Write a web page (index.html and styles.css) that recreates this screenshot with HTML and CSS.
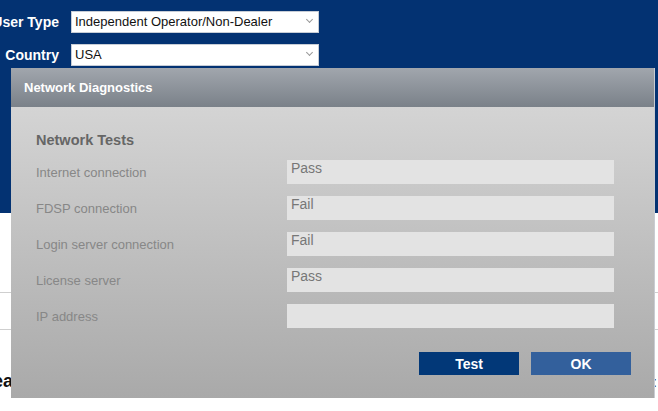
FILE: index.html
```html
<!DOCTYPE html>
<html lang="en">
<head>
  <meta charset="UTF-8">
  <title>Network Diagnostics</title>
  <link rel="stylesheet" href="styles.css">
</head>
<body>
  <div class="page">
    <div class="banner">
      <div class="form-row">
        <label class="form-label">User Type</label>
        <div class="select">Independent Operator/Non-Dealer<span class="chev"></span></div>
      </div>
      <div class="form-row">
        <label class="form-label">Country</label>
        <div class="select">USA<span class="chev"></span></div>
      </div>
    </div>
    <div class="content">
      <div class="rule"></div>
      <div class="rule second"></div>
      <div class="footer-row">
        <h2 class="section-head">Area</h2>
        <span class="colon">:</span>
      </div>
    </div>
  </div>

  <div class="dialog">
    <div class="dialog-head">Network Diagnostics</div>
    <div class="dialog-body">
      <h3 class="tests-title">Network Tests</h3>
      <div class="test-row">
        <span class="test-label">Internet connection</span>
        <div class="test-value">Pass</div>
      </div>
      <div class="test-row">
        <span class="test-label">FDSP connection</span>
        <div class="test-value">Fail</div>
      </div>
      <div class="test-row">
        <span class="test-label">Login server connection</span>
        <div class="test-value">Fail</div>
      </div>
      <div class="test-row">
        <span class="test-label">License server</span>
        <div class="test-value">Pass</div>
      </div>
      <div class="test-row">
        <span class="test-label">IP address</span>
        <div class="test-value"></div>
      </div>
      <div class="actions">
        <button class="btn btn-test">Test</button>
        <button class="btn btn-ok">OK</button>
      </div>
    </div>
  </div>
</body>
</html>
```

FILE: styles.css
```css
body {
  margin: 0;
  font-family: "Liberation Sans", Arial, sans-serif;
  background: #fff;
  width: 658px;
  height: 411px;
  overflow: hidden;
  position: relative;
}
.banner {
  background: #033272;
  height: 213px;
  padding-top: 11px;
  box-sizing: border-box;
}
.form-row {
  display: flex;
  align-items: center;
  gap: 12px;
  margin-bottom: 11px;
}
.form-label {
  width: 59px;
  text-align: right;
  color: #fff;
  font-weight: bold;
  font-size: 14px;
  white-space: nowrap;
  direction: rtl;
}
.select {
  width: 248px;
  height: 22px;
  box-sizing: border-box;
  background: #fff;
  border: 1px solid #c7cdd6;
  font-size: 13px;
  color: #111;
  padding-left: 3px;
  line-height: 20px;
  position: relative;
}
.chev {
  position: absolute;
  right: 6px;
  top: 5px;
  width: 4px;
  height: 4px;
  border-right: 1px solid #999;
  border-bottom: 1px solid #999;
  transform: rotate(45deg);
}
.content {
  padding-top: 79px;
}
.rule {
  height: 1px;
  background: #cfcfcf;
}
.rule.second {
  margin-top: 36px;
}
.footer-row {
  display: flex;
  justify-content: space-between;
  align-items: center;
  margin-top: 41px;
}
.section-head {
  margin: 0 0 0 -27px;
  font-size: 18px;
  color: #111;
}
.colon {
  font-size: 14px;
  color: #333;
  margin-right: 1px;
}

.dialog {
  position: absolute;
  left: 11px;
  top: 68px;
  width: 643px;
  height: 330px;
  display: flex;
  flex-direction: column;
  box-shadow: 1px 0 0 #c9ccd2;
}
.dialog-head {
  height: 39px;
  background: linear-gradient(#a1a6ad, #7a8189);
  color: #fff;
  font-weight: bold;
  font-size: 13px;
  display: flex;
  align-items: center;
  padding-left: 13px;
  flex-shrink: 0;
}
.dialog-body {
  flex: 1;
  background: linear-gradient(#d4d4d4, #a9a9a9);
  padding: 23px 23px 0 25px;
}
.tests-title {
  margin: 0 0 10px;
  font-size: 14.5px;
  line-height: 20px;
  color: #666;
}
.test-row {
  display: flex;
  align-items: center;
  margin-bottom: 12px;
}
.test-label {
  width: 251px;
  font-size: 13px;
  color: #878787;
}
.test-value {
  width: 327px;
  height: 24px;
  background: #e3e3e3;
  font-size: 14px;
  color: #777;
  padding: 1px 4px 0;
  box-sizing: border-box;
  line-height: 15px;
}
.actions {
  display: flex;
  justify-content: flex-end;
  gap: 12px;
  margin-top: 24px;
}
.btn {
  width: 100px;
  height: 23px;
  border: none;
  color: #fff;
  font-family: inherit;
  font-weight: bold;
  font-size: 14px;
  padding: 0;
}
.btn-test {
  background: #023878;
}
.btn-ok {
  background: #33609c;
}
```
